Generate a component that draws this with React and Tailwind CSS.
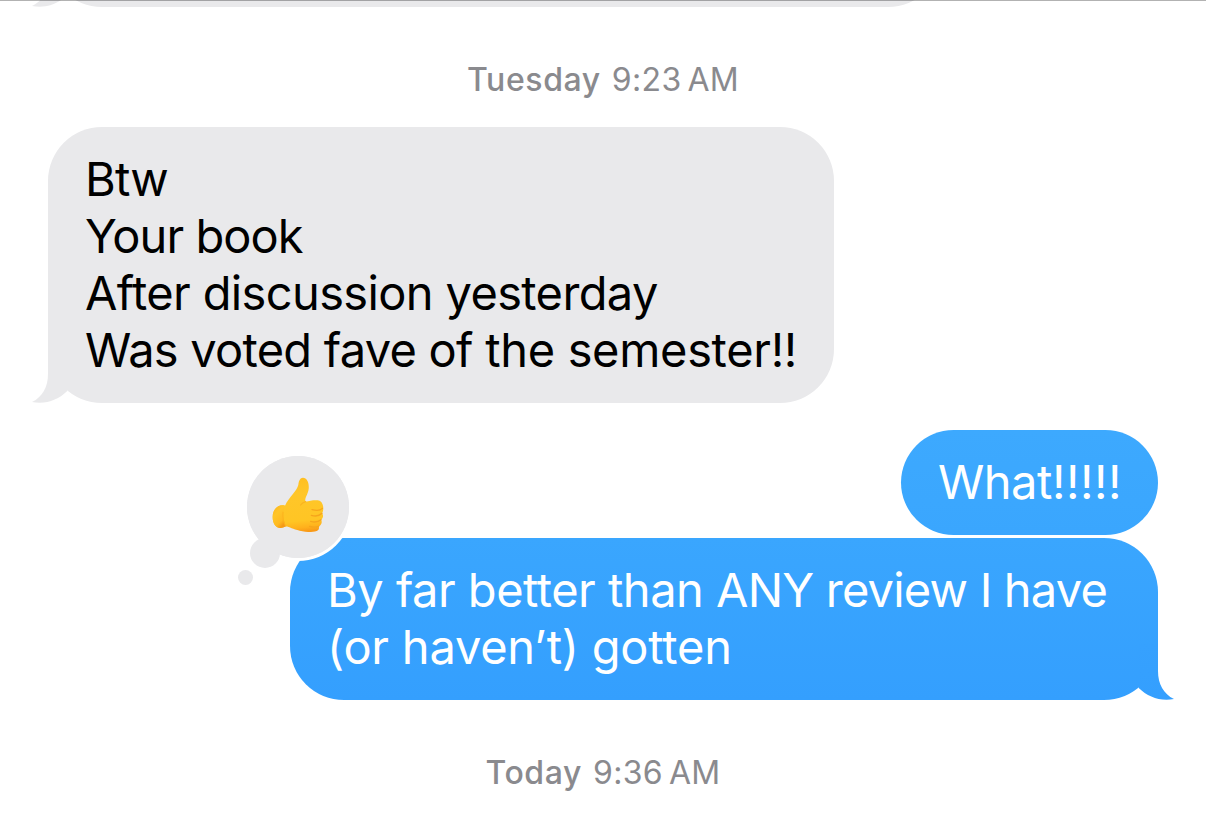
import React from 'react';
import clsx from 'clsx';

const Tail = ({ side, id, from, to }) => (
    <svg
        viewBox="0 0 36 56"
        className={clsx(
            'absolute bottom-0 w-[36px] h-[56px]',
            side === 'left' ? 'left-[-16px]' : 'right-[-16px] -scale-x-100'
        )}
    >
        <defs>
            <linearGradient id={id} x1="0" y1="0" x2="0" y2="1">
                <stop offset="0" stopColor={from} />
                <stop offset="1" stopColor={to} />
            </linearGradient>
        </defs>
        <path d="M16 0V27C16 40 10.5 50 0 55C14 57.5 26 53 35.3 44V0Z" fill={`url(#${id})`} />
    </svg>
);

const Bubble = ({ children, className, tail }) => (
    <div className={clsx('relative rounded-[54px] px-[37px] pt-[23px] pb-[25px] text-[47px] leading-[57px] whitespace-nowrap', className)}>
        {tail}
        {children}
    </div>
);

const Line = ({ children, className }) => <div className={className}>{children}</div>;

const Timestamp = ({ day, time, className }) => (
    <div className={clsx('flex justify-center gap-[11px] text-[32px] leading-[40px] text-[#8a8a8e] whitespace-nowrap', className)}>
        <span className="font-medium tracking-[0.6px]">{day}</span>
        <span className="tracking-[0.35px] [word-spacing:-3.5px]">{time}</span>
    </div>
);

const ThumbsUp = () => (
    <svg viewBox="0 0 180 192" className="absolute left-[21px] top-[17px] w-[60px] h-[64px]">
        <defs>
            <linearGradient id="hand" x1="0.4" y1="0" x2="0.5" y2="1">
                <stop offset="0" stopColor="#ffbf20" />
                <stop offset="0.3" stopColor="#ffc629" />
                <stop offset="0.8" stopColor="#ffc524" />
                <stop offset="0.93" stopColor="#ffb01c" />
                <stop offset="1" stopColor="#f99a17" />
            </linearGradient>
            <linearGradient id="cuff" x1="0" y1="0" x2="0.6" y2="1">
                <stop offset="0" stopColor="#fcb11d" />
                <stop offset="0.4" stopColor="#ffc528" />
                <stop offset="0.8" stopColor="#ffba20" />
                <stop offset="1" stopColor="#f59a17" />
            </linearGradient>
        </defs>
        <path
            d="M105 14C94 15 92 27 91 36C86 55 63 72 51 98C33 93 14 106 14 132C14 160 32 172 53 160C65 161 75 170 95 173C115 177 140 180 150 172C153 169 154 165 152 160C160 157 164 147 159 140C166 135 167 126 162 121C168 114 168 89 155 83C142 80 126 83 113 86C108 78 120 64 122 48C124 29 117 14 105 14Z"
            fill="url(#hand)"
        />
        <path d="M51 98C33 93 14 106 14 132C14 160 32 172 53 160C46 142 42 120 51 98Z" fill="url(#cuff)" />
        <path
            d="M53 160C46 147 43 132 45 118"
            fill="none"
            stroke="#fdb31d"
            strokeWidth="3"
            strokeLinecap="round"
        />
        <path
            d="M163 106C158 112 144 113 132 110M162 121C154 129 140 130 130 127M159 140C151 147 138 148 128 145M152 160C145 163 134 163 125 160"
            fill="none"
            stroke="#f6a51c"
            strokeWidth="4"
            strokeLinecap="round"
        />
        <path d="M113 86C106 88 101 91 98 96" fill="none" stroke="#fbb41f" strokeWidth="4" strokeLinecap="round" />
    </svg>
);

const Tapback = () => (
    <div className="absolute left-[-43px] top-[-82px] w-[102px] h-[102px] rounded-full bg-[#e9e9eb] ring-[3px] ring-white">
        <span className="absolute left-[3px] top-[82px] size-[30px] rounded-full bg-[#e9e9eb]" />
        <span className="absolute left-[-9px] top-[114px] size-[15px] rounded-full bg-[#e9e9eb]" />
        <span className="absolute inset-0 rounded-full bg-[#e9e9eb]" />
        <ThumbsUp />
    </div>
);

const App = () => {
    return (
        <div className="relative w-[1206px] h-[814px] overflow-hidden bg-white text-black font-['Inter',sans-serif] flex flex-col">
            <div className="absolute inset-x-0 top-0 h-px bg-black/30 z-10" />

            {/* Bottom edge of the previous message */}
            <div className="h-[7px] shrink-0 overflow-hidden flex items-end pl-[48px]">
                <Bubble
                    className="w-[894px] h-[120px] shrink-0 bg-[#e9e9eb]"
                    tail={<Tail side="left" id="tail-prev" from="#e9e9eb" to="#e9e9eb" />}
                />
            </div>

            <Timestamp className="mt-[53px]" day="Tuesday" time="9:23 AM" />

            <div className="mt-[27px] pl-[48px] flex">
                <Bubble
                    className="w-[786px] bg-[#e9e9eb]"
                    tail={<Tail side="left" id="tail-in" from="#e9e9eb" to="#e9e9eb" />}
                >
                    <Line className="relative tracking-[-0.8px]">Btw</Line>
                    <Line className="relative tracking-[-0.95px]">Your book</Line>
                    <Line className="relative tracking-[-0.63px]">After discussion yesterday</Line>
                    <Line className="relative tracking-[-0.75px]">
                        Was voted fave of <span className="tracking-[-0.32px]">the semester!!</span>
                    </Line>
                </Bubble>
            </div>

            <div className="mt-[27px] pr-[48px] flex flex-col items-end gap-[3px] text-white">
                <Bubble className="w-[257px] bg-linear-to-b from-[#3da9fe] to-[#3aa6fe]">
                    <Line>
                        <span className="tracking-[-0.5px]">What</span>
                        <span className="tracking-[0.5px]">!!!!!</span>
                    </Line>
                </Bubble>
                <Bubble
                    className="w-[868px] bg-linear-to-b from-[#3aa6fe] to-[#349ffe]"
                    tail={<Tail side="right" id="tail-out" from="#36a1fe" to="#349ffe" />}
                >
                    <Line className="relative tracking-[-0.5px]">
                        By far better than <span className="tracking-[-0.8px]">ANY review I have</span>
                    </Line>
                    <Line className="relative tracking-[-0.22px]">(or haven’t) gotten</Line>
                    <Tapback />
                </Bubble>
            </div>

            <Timestamp className="mt-[53px]" day="Today" time="9:36 AM" />
        </div>
    );
};

export default App;
